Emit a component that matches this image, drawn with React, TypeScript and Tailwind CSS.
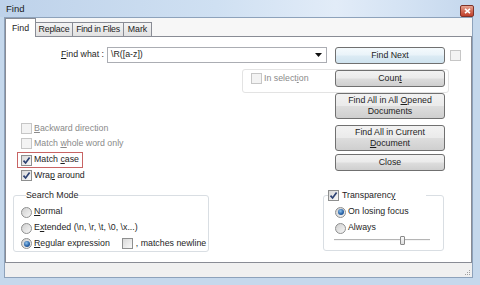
import React from "react";

function Check({ checked = false, disabled = false }: { checked?: boolean; disabled?: boolean }) {
  return (
    <span
      className={
        disabled
          ? "relative inline-block w-[11px] h-[11px] shrink-0 border border-[#c6c6c6] bg-[#f3f3f3]"
          : "relative inline-block w-[11px] h-[11px] shrink-0 border border-[#8e8f8f] bg-[linear-gradient(135deg,#d9d9d9,#f9f9f9)]"
      }
    >
      {checked && (
        <svg width="9" height="9" viewBox="0 0 9 9" className="absolute left-0 top-0">
          <path d="M1.5 4.6 L3.6 7 L7.6 1.6" fill="none" stroke="#2d4273" strokeWidth="1.7" />
        </svg>
      )}
    </span>
  );
}

function Radio({ checked = false }: { checked?: boolean }) {
  return (
    <span className="inline-flex items-center justify-center w-[11px] h-[11px] shrink-0 rounded-full border border-[#8e8f8f] bg-[linear-gradient(135deg,#cfcfcf,#f7f7f7)]">
      {checked && (
        <span className="w-[6px] h-[6px] rounded-full bg-[radial-gradient(circle_at_40%_35%,#8fc3ee_0%,#2a64a8_55%,#173f78_100%)]" />
      )}
    </span>
  );
}

function Btn({ children, className }: { children: React.ReactNode; className: string }) {
  return (
    <div
      className={
        "w-[110px] shrink-0 flex flex-col items-center justify-center text-center leading-[11px] rounded-[3px] border border-[#707070] bg-[linear-gradient(#f2f2f2_0%,#ebebeb_48%,#dddddd_52%,#cfcfcf_100%)] text-[#1e1e1e] " +
        className
      }
    >
      {children}
    </div>
  );
}

export default function App() {
  return (
    <div className="w-[480px] h-[285px] overflow-hidden whitespace-nowrap flex flex-col bg-[#c5d8ec] font-['Liberation_Sans',Arial,sans-serif] text-[8.8px] text-[#1e1e1e]">
      {/* Title bar */}
      <div className="h-[17px] shrink-0 flex justify-between bg-[linear-gradient(90deg,#bed2ea_0%,#cfe0f2_45%,#e2ecf8_70%,#d3e2f3_85%,#c3d6ec_100%)]">
        <div className="pl-[6px] pt-[3px] text-[9.5px] leading-[12px] text-[#1a1a1a]">Find</div>
        <div className="mt-[5px] mr-[6px] w-[14px] h-[12px] rounded-[2px] border border-[#7e3329] bg-[linear-gradient(#e6a594_0%,#d26a55_50%,#c0402c_100%)] flex items-center justify-center">
          <svg width="7" height="6" viewBox="0 0 7 6">
            <path d="M1 0.8 L6 5.2 M6 0.8 L1 5.2" stroke="#ffffff" strokeWidth="1.6" />
          </svg>
        </div>
      </div>

      {/* Middle */}
      <div className="flex h-[261px] shrink-0">
        <div className="w-[4px] shrink-0" />
        <div className="w-[469px] shrink-0 border border-[#8da2bb] bg-[#f7f7f7] flex flex-col">
          {/* Tabs */}
          <div className="h-[18px] shrink-0 flex items-end">
            <div className="relative z-10 -mb-px h-[19px] w-[31px] bg-white border-l border-t border-r border-[#898c95] flex justify-center pt-[3px] leading-[12px]">
              Find
            </div>
            <div className="h-[14px] w-[37px] border-t border-r border-[#898c95] bg-[linear-gradient(#f4f4f4,#e1e1e1)] flex justify-center pt-[1px] leading-[11px] tracking-[-0.2px]">
              Replace
            </div>
            <div className="h-[14px] w-[51px] border-t border-r border-[#898c95] bg-[linear-gradient(#f4f4f4,#e1e1e1)] flex justify-center pt-[1px] leading-[11px] tracking-[-0.3px]">
              Find in Files
            </div>
            <div className="h-[14px] w-[28px] border-t border-r border-[#898c95] bg-[linear-gradient(#f4f4f4,#e1e1e1)] flex justify-center pt-[1px] leading-[11px]">
              Mark
            </div>
          </div>

          {/* Panel */}
          <div className="h-[227px] shrink-0 border border-[#898c95] bg-white flex flex-col">
            {/* Row A */}
            <div className="mt-[10px] h-[17px] flex items-start">
              <div className="w-[98px] h-[16px] flex items-center justify-end">
                <span>
                  <u>F</u>ind what :
                </span>
              </div>
              <div className="ml-[3px] w-[220px] h-[16px] border border-[#abadb3] bg-white flex items-center justify-between pl-[3px] pr-[4px]">
                <span>\R([a-z])</span>
                <svg width="7" height="4" viewBox="0 0 7 4">
                  <path d="M0 0 L7 0 L3.5 4 Z" fill="#111" />
                </svg>
              </div>
              <Btn className="ml-[8px] h-[17px] border-[#5aa8d6] bg-[linear-gradient(#f4fafd_0%,#e9f3f9_48%,#dcebf4_52%,#cfe3ef_100%)]">
                Find Next
              </Btn>
              <div className="ml-[5px] mt-[3px]">
                <Check disabled />
              </div>
            </div>

            {/* Row B */}
            <div className="mt-[5px] ml-[236px] w-[207px] h-[24px] border border-[#e3e3e3] rounded-[3px] flex items-start">
              <div className="w-[92px] h-[17px] flex items-center pl-[8px] gap-[2px] text-[#8a8a8a]">
                <Check disabled />
                <span>
                  In select<u>i</u>on
                </span>
              </div>
              <Btn className="h-[17px]">
                <span>
                  Coun<u>t</u>
                </span>
              </Btn>
            </div>

            {/* Row C */}
            <div className="flex">
              <div className="w-[329px] shrink-0 pt-[28px] flex flex-col items-start">
                <div className="h-[15px] flex items-center pl-[15px] gap-[2px] text-[#8a8a8a]">
                  <Check disabled />
                  <span>
                    <u>B</u>ackward direction
                  </span>
                </div>
                <div className="h-[15px] flex items-center pl-[15px] gap-[2px] text-[#8a8a8a]">
                  <Check disabled />
                  <span>
                    Match <u>w</u>hole word only
                  </span>
                </div>
                <div className="mt-[1px] ml-[11px] h-[16px] border border-[#c86464] flex items-center pl-[3px] pr-[3px] gap-[2px]">
                  <Check checked />
                  <span>
                    Match <u>c</u>ase
                  </span>
                </div>
                <div className="h-[15px] flex items-center pl-[15px] gap-[2px]">
                  <Check checked />
                  <span>
                    Wra<u>p</u> around
                  </span>
                </div>
              </div>
              <div className="flex flex-col">
                <Btn className="h-[26px]">
                  <span>
                    Find All in All <u>O</u>pened
                  </span>
                  <span>Documents</span>
                </Btn>
                <Btn className="mt-[6px] h-[26px]">
                  <span>Find All in Current</span>
                  <span>
                    <u>D</u>ocument
                  </span>
                </Btn>
                <Btn className="mt-[3px] h-[17px]">Close</Btn>
              </div>
            </div>

            {/* Row D */}
            <div className="mt-[7px] flex items-start">
              <fieldset className="ml-[7px] w-[196px] shrink-0 border border-[#d9dee3] rounded-[3px] pl-[7px] pt-[3px]">
                <legend className="ml-[5px] px-0 leading-[11px]">Search Mode</legend>
                <div className="h-[16px] flex items-center gap-[2px]">
                  <Radio />
                  <span>
                    <u>N</u>ormal
                  </span>
                </div>
                <div className="h-[16px] flex items-center gap-[2px]">
                  <Radio />
                  <span>
                    E<u>x</u>tended (\n, \r, \t, \0, \x...)
                  </span>
                </div>
                <div className="h-[15px] flex items-center gap-[2px]">
                  <Radio checked />
                  <span>
                    <u>R</u>egular expression
                  </span>
                  <span className="ml-[10px] flex">
                    <Check />
                  </span>
                  <span className="ml-[1px]">, matches newline</span>
                </div>
              </fieldset>

              <fieldset className="ml-[114px] w-[121px] shrink-0 border border-[#d9dee3] rounded-[3px] pl-[11px] pt-[3px] pb-[5px]">
                <legend className="-ml-[7px] w-[98px] h-[11px] flex items-center gap-[3px] leading-[11px]">
                  <Check checked />
                  <span>
                    Transparenc<u>y</u>
                  </span>
                </legend>
                <div className="h-[16px] flex items-center gap-[2px]">
                  <Radio checked />
                  <span>On losing focus</span>
                </div>
                <div className="h-[16px] flex items-center gap-[2px]">
                  <Radio />
                  <span>Always</span>
                </div>
                <div className="relative h-[9px] ml-[-1px] w-[96px]">
                  <div className="absolute left-0 right-0 top-[3px] h-[2px] border-t border-[#b5b5b5] border-b border-b-[#f4f4f4] bg-[#e4e4e4]" />
                  <div className="absolute left-[66px] top-0 w-[5px] h-[9px] rounded-[1px] border border-[#8a8a8a] bg-[linear-gradient(#fafafa,#dedede)]" />
                </div>
              </fieldset>
            </div>
          </div>

          {/* Status strip */}
          <div className="flex-1 bg-[#f0f0f0] flex justify-end items-end pr-[1px] pb-[1px]">
            <svg width="7" height="7" viewBox="0 0 7 7">
              <rect x="5" y="1" width="1" height="1" fill="#a0a0a0" />
              <rect x="3" y="3" width="1" height="1" fill="#a0a0a0" />
              <rect x="5" y="3" width="1" height="1" fill="#a0a0a0" />
              <rect x="1" y="5" width="1" height="1" fill="#a0a0a0" />
              <rect x="3" y="5" width="1" height="1" fill="#a0a0a0" />
              <rect x="5" y="5" width="1" height="1" fill="#a0a0a0" />
            </svg>
          </div>
        </div>
        <div className="flex-1" />
      </div>
      <div className="flex-1" />
    </div>
  );
}
